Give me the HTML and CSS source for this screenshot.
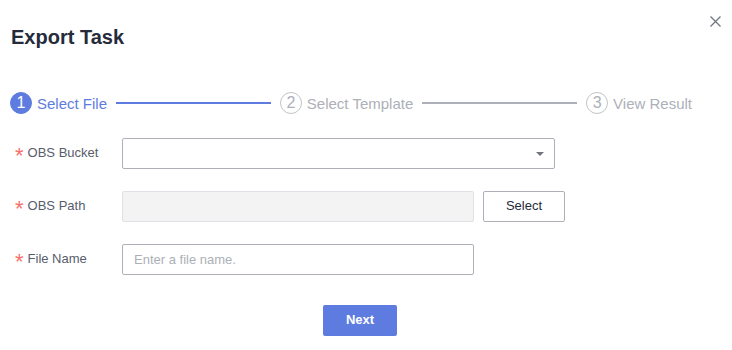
FILE: index.html
```html
<!DOCTYPE html>
<html lang="en">
<head>
<meta charset="utf-8">
<title>Export Task</title>
<link rel="stylesheet" href="styles.css">
</head>
<body>
<div class="dialog">
  <div class="header">
    <h1 class="title">Export Task</h1>
    <button class="close" aria-label="Close">
      <svg width="11" height="11" viewBox="0 0 11 11"><path d="M0.5 0.5 L10.5 10.5 M10.5 0.5 L0.5 10.5" stroke="#71757f" stroke-width="1.3" fill="none"/></svg>
    </button>
  </div>
  <div class="steps">
    <span class="dot active">1</span><span class="step-label active">Select File</span>
    <span class="line active"></span>
    <span class="dot">2</span><span class="step-label">Select Template</span>
    <span class="line"></span>
    <span class="dot">3</span><span class="step-label">View Result</span>
  </div>
  <div class="form">
    <div class="row">
      <label class="label"><span class="req">*</span>OBS Bucket</label>
      <div class="select">
        <svg class="caret" width="8" height="4" viewBox="0 0 8 4"><path d="M0 0 H8 L4 4 Z" fill="#71757f"/></svg>
      </div>
    </div>
    <div class="row">
      <label class="label"><span class="req">*</span>OBS Path</label>
      <input class="input" disabled>
      <button class="btn">Select</button>
    </div>
    <div class="row">
      <label class="label"><span class="req">*</span>File Name</label>
      <input class="input" placeholder="Enter a file name.">
    </div>
  </div>
  <div class="footer">
    <button class="primary">Next</button>
  </div>
</div>
</body>
</html>
```
FILE: styles.css
```css
* { box-sizing: border-box; }
body {
  margin: 0;
  background: #fff;
  font-family: "Liberation Sans", Arial, sans-serif;
  color: #252b3a;
}
.dialog {
  width: 732px;
  height: 350px;
}
.header {
  display: flex;
  justify-content: space-between;
  align-items: flex-start;
  padding: 16px 11px 0 11px;
}
.title {
  margin: 9px 0 0 0;
  font-size: 20px;
  line-height: 24px;
  font-weight: 700;
  color: #252b3a;
}
.close {
  border: 0;
  background: none;
  padding: 0;
  width: 11px;
  height: 11px;
  display: block;
}
.close svg { display: block; }
.steps {
  display: flex;
  align-items: center;
  margin-top: 43px;
  padding: 0 40px 0 10px;
  height: 22px;
}
.dot {
  width: 22px;
  height: 22px;
  border-radius: 50%;
  border: 1px solid #c2c4ca;
  color: #adb0b8;
  font-size: 16px;
  display: flex;
  align-items: center;
  justify-content: center;
  flex: none;
}
.dot.active {
  background: #5e7ce0;
  border-color: #5e7ce0;
  color: #fff;
}
.step-label {
  margin-left: 5px;
  font-size: 15px;
  color: #adb0b8;
  white-space: nowrap;
  padding-top: 1px;
}
.step-label.active { color: #5e7ce0; }
.line {
  flex: 1;
  height: 2px;
  background: #adb0b8;
  margin: 0 9px;
}
.line.active { background: #5e7ce0; }
.form {
  margin-top: 24px;
  padding-left: 15px;
  display: flex;
  flex-direction: column;
  gap: 22px;
}
.row {
  display: flex;
  align-items: center;
  height: 31px;
}
.label {
  width: 107px;
  flex: none;
  font-size: 13px;
  line-height: 16px;
  color: #575d6c;
  display: block;
  padding-bottom: 2px;
}
.req {
  color: #f66f6a;
  font-size: 22px;
  line-height: 0;
  vertical-align: -6px;
  margin-right: 4px;
}
.select {
  width: 433px;
  height: 31px;
  border: 1px solid #adb0b8;
  border-radius: 2px;
  display: flex;
  align-items: center;
  justify-content: flex-end;
  padding-right: 10px;
}
.caret { display: block; }
.input {
  width: 352px;
  height: 31px;
  border: 1px solid #adb0b8;
  border-radius: 2px;
  padding: 0 11px;
  font-family: inherit;
  font-size: 13px;
  color: #252b3a;
  outline: none;
  background: #fff;
}
.input:disabled {
  background: #f3f3f4;
  border-color: #dfe1e6;
}
.input::placeholder { color: #adb0b8; }
.btn {
  margin-left: 9px;
  width: 82px;
  height: 31px;
  border: 1px solid #adb0b8;
  border-radius: 2px;
  background: #fff;
  font-family: inherit;
  font-size: 13px;
  color: #252b3a;
  padding: 0 0 2px 0;
}
.footer {
  display: flex;
  justify-content: center;
  padding-right: 12px;
  margin-top: 30px;
}
.primary {
  width: 74px;
  height: 31px;
  border: 0;
  border-radius: 2px;
  background: #5e7ce0;
  color: #fff;
  font-family: inherit;
  font-size: 13px;
  font-weight: 700;
  padding: 0 0 2px 0;
}
```
